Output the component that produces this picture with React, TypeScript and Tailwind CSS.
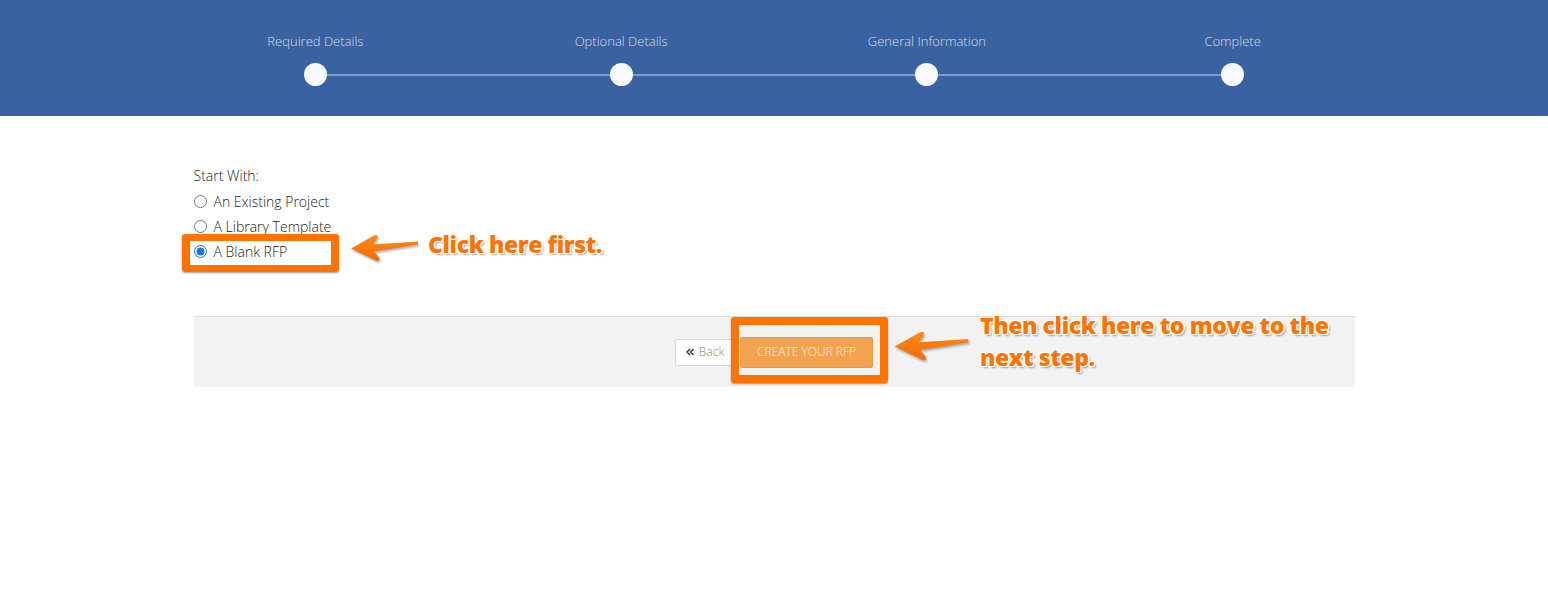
import { ChevronsLeft } from "lucide-react";

const steps = ["Required Details", "Optional Details", "General Information", "Complete"];

const options = [
  { label: "An Existing Project", checked: false },
  { label: "A Library Template", checked: false },
  { label: "A Blank RFP", checked: true },
];

const calloutText =
  "font-['Open_Sans',sans-serif] font-extrabold text-[23px] text-[#ff7300] tracking-[-0.4px] [text-shadow:1px_1px_0_#fff,-1px_-1px_0_#fff,1px_-1px_0_#fff,-1px_1px_0_#fff,0_1px_0_#fff,0_-1px_0_#fff,1px_0_0_#fff,-1px_0_0_#fff,2px_2px_2px_rgba(0,0,0,0.35)]";

function Arrow({ width, height }: { width: number; height: number }) {
  return (
    <svg width={width} height={height} viewBox="0 0 70 30" className="drop-shadow-[1px_2px_1px_rgba(0,0,0,0.3)]">
      <defs>
        <linearGradient id="arrowFill" x1="0" y1="0" x2="0" y2="1">
          <stop offset="0" stopColor="#ff8a1e" />
          <stop offset="1" stopColor="#f26a00" />
        </linearGradient>
      </defs>
      <path
        d="M2 16 L25 3 Q30 1 28 6 L24 12 L69 9 L69 12 L25 19 L30 25 Q32 29 27 28 Z"
        fill="url(#arrowFill)"
      />
    </svg>
  );
}

export default function App() {
  return (
    <div className="relative min-h-[591px] bg-white font-['Open_Sans',sans-serif]">
      {/* Progress header */}
      <header className="h-[116px] bg-[#3a62a0]">
        <div className="relative mx-auto grid w-[1223px] grid-cols-4 pt-[31px]">
          <div className="absolute left-[153px] right-[153px] top-[74px] h-[2px] bg-[#7f9dcb]" />
          {steps.map((step) => (
            <div key={step} className="relative flex flex-col items-center">
              <span className="text-[13px] font-light leading-[20px] text-[#d3deef]">{step}</span>
              <span className="mt-[12px] h-[23px] w-[23px] rounded-full bg-[#f7f9ff]" />
            </div>
          ))}
        </div>
      </header>

      {/* Start with */}
      <main className="mx-auto w-[1161px] pt-[50px]">
        <p className="text-[14px] font-light leading-[20px] text-[#222]">Start With:</p>
        <div className="mt-[3px] flex flex-col">
          {options.map((opt) => (
            <label key={opt.label} className="flex h-[25px] items-center gap-[7px] text-[14px] font-light text-[#222]">
              <input
                type="radio"
                name="start"
                defaultChecked={opt.checked}
                className="m-0 h-[13px] w-[13px] accent-[#1a73e8]"
              />
              {opt.label}
            </label>
          ))}
        </div>

        {/* Footer actions */}
        <div className="mt-[52px] flex h-[71px] items-center justify-center gap-[7px] border-t border-[#dddddd] bg-[#f2f2f2]">
          <button className="flex h-[27px] w-[58px] items-center justify-center gap-[3px] rounded-[2px] border border-[#cfd8e3] bg-white text-[12px] font-light text-[#888]">
            <ChevronsLeft size={12} strokeWidth={3.5} className="text-[#444]" />
            Back
          </button>
          <div className="relative">
            <button className="h-[31px] w-[133px] rounded-[2px] border border-[#ee9840] bg-[#f3a24f] text-[12px] font-light uppercase text-[#fff1e3]">
              Create your RFP
            </button>
            <div className="pointer-events-none absolute -left-[9px] -right-[15px] -top-[20px] -bottom-[15px] rounded-[3px] border-[8px] border-[#ff7300] shadow-[0_1px_2px_rgba(0,0,0,0.4)]" />
          </div>
        </div>
      </main>

      {/* Annotations */}
      <div className="pointer-events-none absolute left-[182px] top-[234px] h-[38px] w-[157px] rounded-[3px] border-x-[8px] border-y-[7px] border-[#ff7300] shadow-[0_1px_2px_rgba(0,0,0,0.4)]" />
      <div className="pointer-events-none absolute left-[349px] top-[232px]">
        <Arrow width={70} height={31} />
      </div>
      <p className={`absolute left-[428px] top-[229px] leading-[30px] ${calloutText}`}>
        Click here first.
      </p>

      <div className="pointer-events-none absolute left-[889px] top-[329px]">
        <Arrow width={84} height={33} />
      </div>
      <p className={`absolute left-[980px] top-[309px] w-[380px] leading-[32px] ${calloutText}`}>
        Then click here to move to the next step.
      </p>
    </div>
  );
}
